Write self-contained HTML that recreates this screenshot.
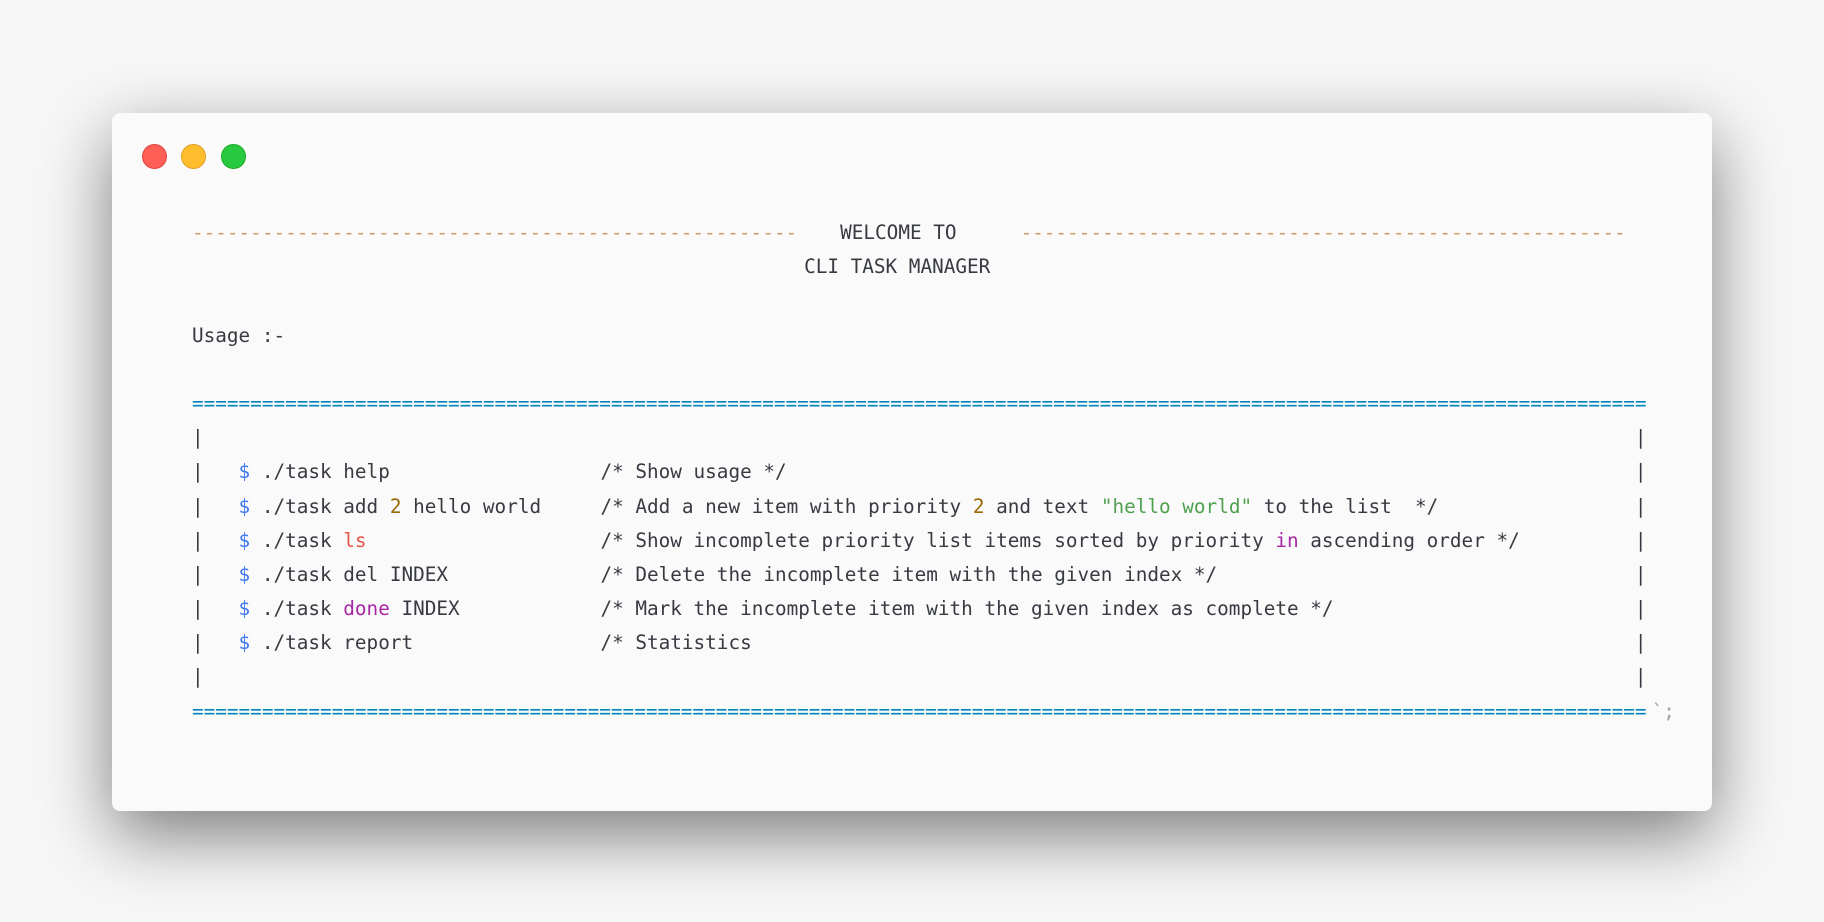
<!DOCTYPE html>
<html><head><meta charset="utf-8">
<style>
html,body{margin:0;padding:0;width:1824px;height:922px;background:#f7f7f7;overflow:hidden}
.win{position:absolute;left:112px;top:113px;width:1600px;height:698px;background:#fafafa;border-radius:8px;box-shadow:0 24px 70px rgba(0,0,0,0.5)}
.dot{position:absolute;top:144px;width:23px;height:23px;border-radius:50%}
.code{position:absolute;left:192px;top:216px;font-family:"DejaVu Sans Mono","Liberation Mono",monospace;font-size:19.33px;line-height:34.2px;color:#383a42;white-space:nowrap}
.ln{position:relative;height:34.2px;white-space:pre}
.ln span.a{position:absolute;top:0}
.o{color:#d19a66}.b{color:#0184bc}.d{color:#4078f2}.n{color:#986801}.r{color:#e45649}.g{color:#50a14f}.p{color:#a626a4}.gr{color:#a0a1a7}
</style></head><body>
<div class="win"></div>
<div class="dot" style="left:142px;background:#ff5f56;border:1px solid #e0443e"></div>
<div class="dot" style="left:181px;background:#ffbd2e;border:1px solid #dea123"></div>
<div class="dot" style="left:221px;background:#27c93f;border:1px solid #1aab29"></div>
<div class="code"><div class="ln"><span class="a o" style="left:0">----------------------------------------------------</span><span class="a" style="left:55.7ch">WELCOME TO</span><span class="a o" style="left:71.2ch">----------------------------------------------------</span></div><div class="ln"><span class="a" style="left:52.6ch">CLI TASK MANAGER</span></div><div class="ln"></div><div class="ln">Usage :-</div><div class="ln"></div><div class="ln b">=============================================================================================================================</div><div class="ln">|<span class="a" style="left:124ch">|</span></div><div class="ln">|   <span class="d">$</span> ./task help<span class="a" style="left:35.1ch">/* Show usage */</span><span class="a" style="left:124ch">|</span></div><div class="ln">|   <span class="d">$</span> ./task add <span class="n">2</span> hello world<span class="a" style="left:35.1ch">/* Add a new item with priority <span class="n">2</span> and text <span class="g">"hello world"</span> to the list  */</span><span class="a" style="left:124ch">|</span></div><div class="ln">|   <span class="d">$</span> ./task <span class="r">ls</span><span class="a" style="left:35.1ch">/* Show incomplete priority list items sorted by priority <span class="p">in</span> ascending order */</span><span class="a" style="left:124ch">|</span></div><div class="ln">|   <span class="d">$</span> ./task del INDEX<span class="a" style="left:35.1ch">/* Delete the incomplete item with the given index */</span><span class="a" style="left:124ch">|</span></div><div class="ln">|   <span class="d">$</span> ./task <span class="p">done</span> INDEX<span class="a" style="left:35.1ch">/* Mark the incomplete item with the given index as complete */</span><span class="a" style="left:124ch">|</span></div><div class="ln">|   <span class="d">$</span> ./task report<span class="a" style="left:35.1ch">/* Statistics</span><span class="a" style="left:124ch">|</span></div><div class="ln">|<span class="a" style="left:124ch">|</span></div><div class="ln"><span class="b">=============================================================================================================================</span><span class="gr" style="margin-left:5px">`;</span></div></div>
</body></html>
